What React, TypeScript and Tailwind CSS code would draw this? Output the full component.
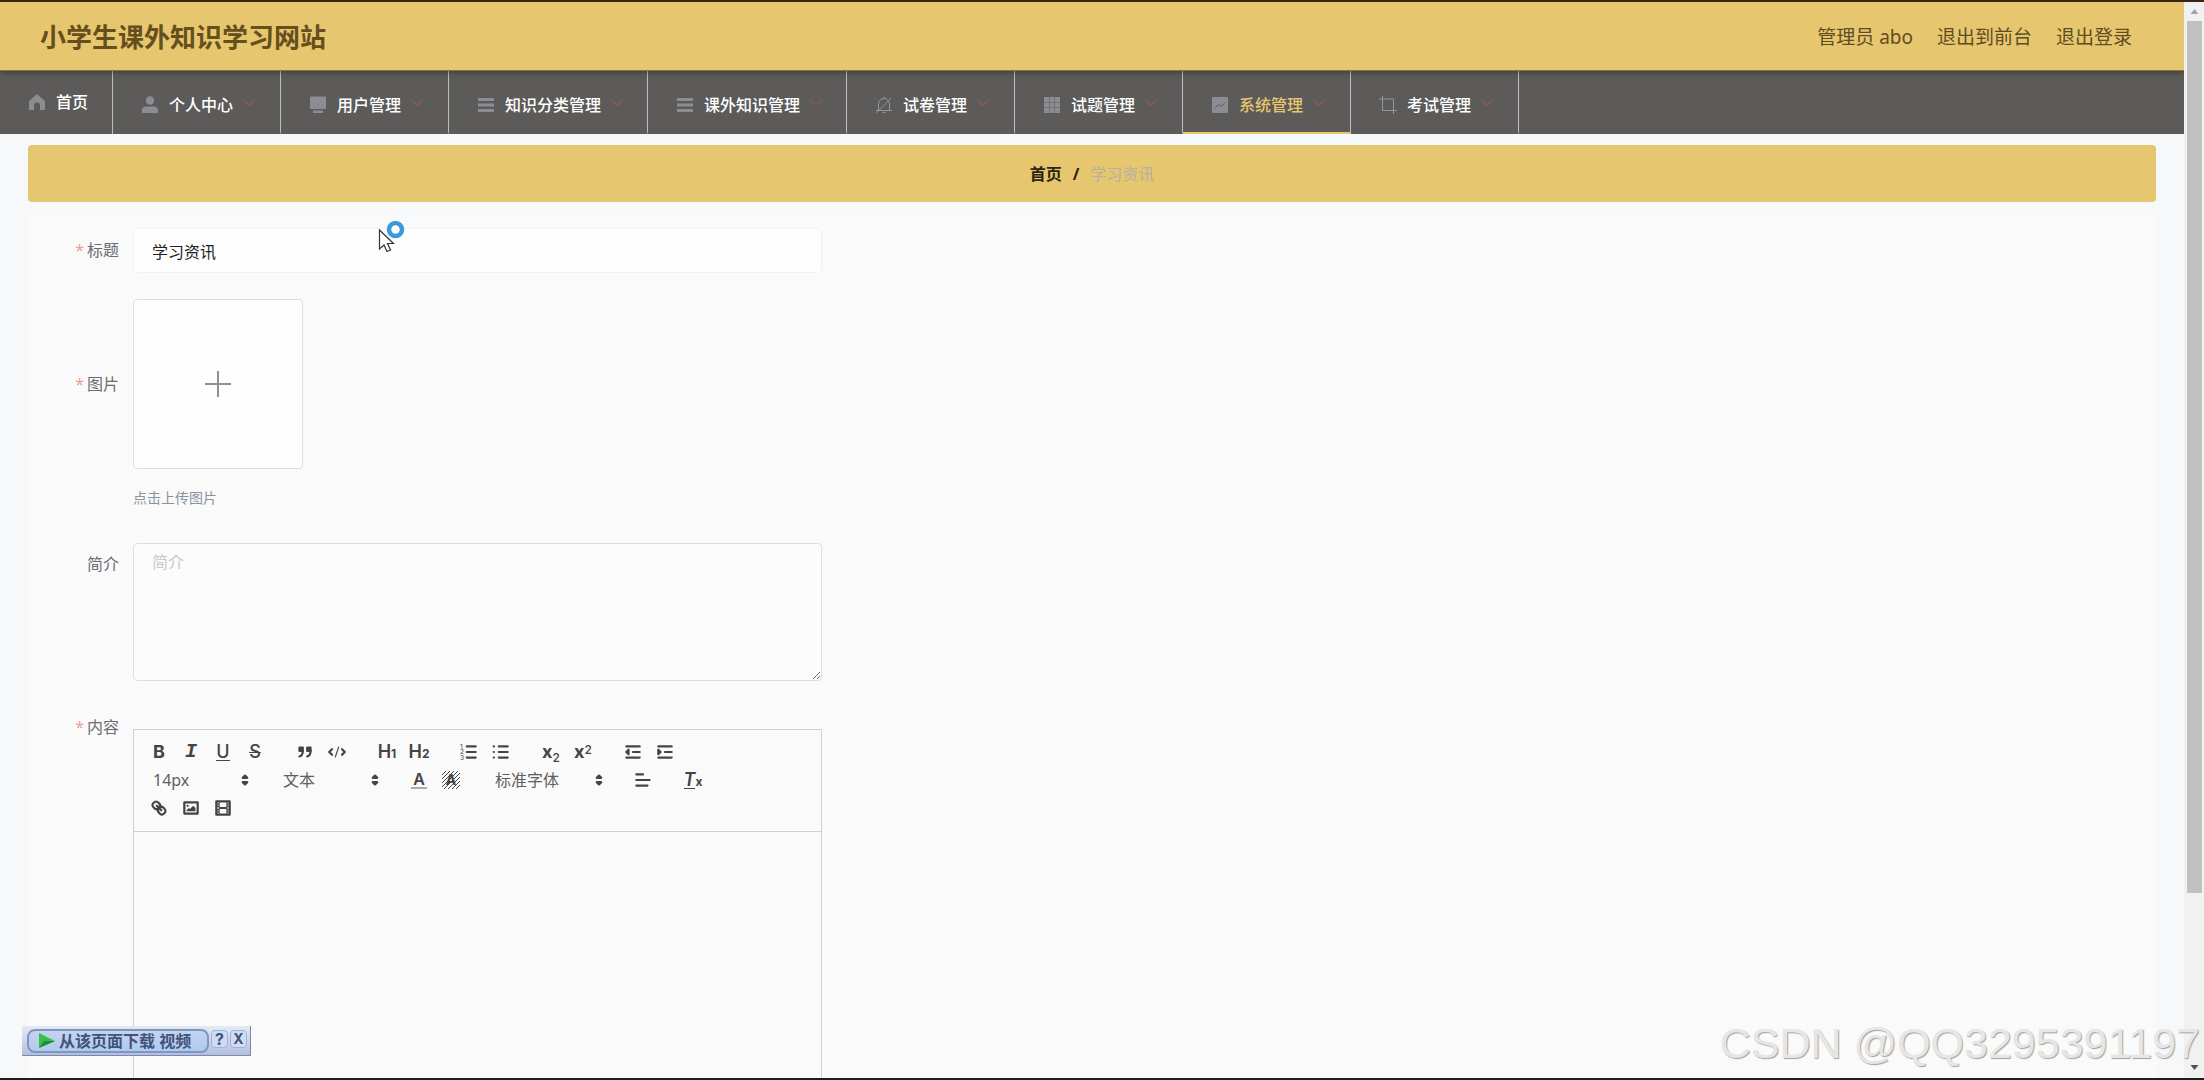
import React, { useState } from "react";

interface MenuItem {
  label: string;
  icon: React.ReactNode;
  wide?: boolean;
  active?: boolean;
}

interface FormRowProps {
  label: string;
  htmlFor: string;
  required?: boolean;
  labelClass: string;
  children: React.ReactNode;
}

const MenuIcon: React.FC<{ children: React.ReactNode }> = ({ children }) => (
  <svg viewBox="0 0 18 18" className="h-[18px] w-[18px] shrink-0 fill-[#8b8d93] stroke-none">
    {children}
  </svg>
);

const homeIcon = (
  <MenuIcon>
    <path d="M9 1 1 8.200V17h5v-4.500a3 3 0 0 1 6 0V17h5V8.200z" />
  </MenuIcon>
);

const lineIcon = (
  <MenuIcon>
    <path d="M1 2h16v3H1zM1 7.500h16v3H1zM1 13h16v3H1z" />
  </MenuIcon>
);

const menus: MenuItem[] = [
  {
    label: "个人中心",
    icon: (
      <MenuIcon>
        <circle cx="9" cy="4.500" r="4.200" />
        <path d="M1 17v-2.500a4 4 0 0 1 4-4h8a4 4 0 0 1 4 4V17z" />
      </MenuIcon>
    ),
  },
  {
    label: "用户管理",
    icon: (
      <MenuIcon>
        <path d="M2 .500h14a1 1 0 0 1 1 1V12a1 1 0 0 1-1 1H2a1 1 0 0 1-1-1V1.500a1 1 0 0 1 1-1zM4 14.500h10V17H4z" />
      </MenuIcon>
    ),
  },
  { label: "知识分类管理", icon: lineIcon, wide: true },
  { label: "课外知识管理", icon: lineIcon, wide: true },
  {
    label: "试卷管理",
    icon: (
      <svg viewBox="0 0 18 18" className="h-[18px] w-[18px] shrink-0 fill-none stroke-[#94969c]">
        <path d="M3.500 14V8a5.500 5.500 0 0 1 11 0v6M1 14.500h16M9 .500V3M7.500 16.500h3M1.500 17 16 2" />
      </svg>
    ),
  },
  {
    label: "试题管理",
    icon: (
      <MenuIcon>
        <path d="M1 1h5v5H1zM6.500 1h5v5h-5zM12 1h5v5h-5zM1 6.500h5v5H1zM6.500 6.500h5v5h-5zM12 6.500h5v5h-5zM1 12h5v5H1zM6.500 12h5v5h-5zM12 12h5v5h-5z" />
      </MenuIcon>
    ),
  },
  {
    label: "系统管理",
    active: true,
    icon: (
      <MenuIcon>
        <rect x="1" y="1" width="16" height="16" rx="1" />
        <path d="m4 12 3.500-3.500 2.500 2L14 6.500" className="fill-none stroke-[#5d5b59]" />
      </MenuIcon>
    ),
  },
  {
    label: "考试管理",
    icon: (
      <svg viewBox="0 0 18 18" className="h-[18px] w-[18px] shrink-0 fill-none stroke-[#94969c]">
        <path d="M0 3h14.500v15M3.500 0v14.500H18" />
      </svg>
    ),
  },
];

// 编辑器工具栏图标
const ToolIcon: React.FC<{ children: React.ReactNode }> = ({ children }) => (
  <svg
    viewBox="0 0 18 18"
    className="h-5 w-5 fill-none stroke-[#444] stroke-2"
    strokeLinecap="round"
    strokeLinejoin="round"
  >
    {children}
  </svg>
);

const ToolButton: React.FC<{ title: string; children: React.ReactNode }> = ({ title, children }) => (
  <button
    type="button"
    aria-label={title}
    className="flex h-7 w-8 items-center justify-center font-[Inter,sans-serif] text-lg leading-none font-semibold text-[#444]"
  >
    {children}
  </button>
);

const ToolSelect: React.FC<{ title: string; value: string; className: string }> = ({
  title,
  value,
  className,
}) => (
  <div className={`relative h-7 ${className}`}>
    <select
      aria-label={title}
      className="h-7 w-full appearance-none bg-transparent pl-[10px] text-base leading-7 text-[#606060] outline-none"
    >
      <option>{value}</option>
    </select>
    <svg
      viewBox="0 0 18 18"
      className="pointer-events-none absolute top-1 right-0 h-5 w-5 fill-[#444] stroke-[#444] stroke-2"
      strokeLinejoin="round"
    >
      <path d="M7 11 9 13l2-2zM7 7l2-2 2 2z" />
    </svg>
  </div>
);

const Toolbar: React.FC = () => (
  <div className="border border-[#d0d0d0] px-[9px] pt-2 pb-[9px]">
    <div className="flex gap-[18px]">
      <div className="flex">
        <ToolButton title="加粗">
          <span className="font-bold">B</span>
        </ToolButton>
        <ToolButton title="斜体">
          <span className="font-['Liberation_Mono',monospace] text-xl leading-5 font-bold italic">I</span>
        </ToolButton>
        <ToolButton title="下划线">
          <span className="border-b border-[#444] text-lg leading-4 font-medium">U</span>
        </ToolButton>
        <ToolButton title="删除线">
          <span className="font-medium line-through decoration-1">S</span>
        </ToolButton>
      </div>
      <div className="flex">
        <ToolButton title="引用">
          <ToolIcon>
            <rect className="fill-[#444]" x="4" y="5" width="3" height="3" />
            <rect className="fill-[#444]" x="11" y="5" width="3" height="3" />
            <path d="M7 8c0 4.031-3 5-3 5M14 8c0 4.031-3 5-3 5" />
          </ToolIcon>
        </ToolButton>
        <ToolButton title="代码">
          <ToolIcon>
            <path d="M4.500 6.500 2 9l2.500 2.500M13.500 6.500 16 9l-2.500 2.500" />
            <path d="M10.500 4.500 7.500 13.500" className="stroke-1" />
          </ToolIcon>
        </ToolButton>
      </div>
      <div className="flex">
        <ToolButton title="标题1">
          H<span className="self-end pb-1 text-xs font-bold">1</span>
        </ToolButton>
        <ToolButton title="标题2">
          H<span className="self-end pb-1 text-xs font-bold">2</span>
        </ToolButton>
      </div>
      <div className="flex">
        <ToolButton title="有序列表">
          <ToolIcon>
            <path d="M7 4h8M7 9h8M7 14h8" />
            <g className="fill-[#444] stroke-none text-[6px] font-normal">
              <text x="1" y="6">1</text>
              <text x="1" y="11">2</text>
              <text x="1" y="16">3</text>
            </g>
          </ToolIcon>
        </ToolButton>
        <ToolButton title="无序列表">
          <ToolIcon>
            <path d="M7 4h8M7 9h8M7 14h8" />
            <path d="M2.500 4h.1M2.500 9h.1M2.500 14h.1" />
          </ToolIcon>
        </ToolButton>
      </div>
      <div className="flex">
        <ToolButton title="下标">
          <span className="font-bold">x</span>
          <span className="self-end text-xs font-medium">2</span>
        </ToolButton>
        <ToolButton title="上标">
          <span className="font-bold">x</span>
          <span className="self-start pt-1 text-xs font-medium">2</span>
        </ToolButton>
      </div>
      <div className="flex">
        <ToolButton title="减少缩进">
          <ToolIcon>
            <path d="M3 14h12M3 4h12M9 9h6" />
            <path className="fill-[#444]" d="M5 7v4L3 9z" />
          </ToolIcon>
        </ToolButton>
        <ToolButton title="增加缩进">
          <ToolIcon>
            <path d="M3 14h12M3 4h12M9 9h6" />
            <path className="fill-[#444]" d="M3 7v4l2-2z" />
          </ToolIcon>
        </ToolButton>
      </div>
    </div>

    <div className="flex gap-[18px]">
      <ToolSelect title="字号" value="14px" className="w-[112px]" />
      <ToolSelect title="标题" value="文本" className="w-[112px]" />
      <div className="flex">
        <ToolButton title="字体颜色">
          <span className="border-b-2 border-[#aaa] px-[2px] text-base leading-4">A</span>
        </ToolButton>
        <ToolButton title="背景颜色">
          <svg viewBox="0 0 18 18" className="h-[18px] w-[18px]">
            <path
              d="M0 4 4 0M0 8 8 0M0 12 12 0M0 16 16 0M2 18 18 2M6 18 18 6M10 18 18 10M14 18l4-4"
              className="stroke-[#444] stroke-1"
            />
            <text x="9" y="14" textAnchor="middle" className="fill-[#444] text-sm font-bold">
              A
            </text>
          </svg>
        </ToolButton>
      </div>
      <ToolSelect title="字体" value="标准字体" className="w-[124px]" />
      <ToolButton title="对齐">
        <ToolIcon>
          <path d="M3 9h12M3 14h10M3 4h6" />
        </ToolIcon>
      </ToolButton>
      <ToolButton title="清除格式">
        <span className="border-b border-[#444] text-lg leading-4 italic">T</span>
        <span className="self-end pb-1 text-xs font-bold">x</span>
      </ToolButton>
    </div>

    <div className="flex">
      <ToolButton title="链接">
        <ToolIcon>
          <path d="m7 7 4 4" />
          <path d="M8.900 4.577a3.476 3.476 0 0 1 .36 4.679A3.476 3.476 0 0 1 4.577 8.900C3.185 7.500 2.035 6.400 4.217 4.217S7.500 3.185 8.900 4.577Z" />
          <path d="M13.423 9.100a3.476 3.476 0 0 0-4.679-.36 3.476 3.476 0 0 0 .36 4.679c1.392 1.392 2.500 2.542 4.679.36S14.815 10.500 13.423 9.100Z" />
        </ToolIcon>
      </ToolButton>
      <ToolButton title="图片">
        <ToolIcon>
          <rect x="3" y="4" width="12" height="10" />
          <g className="fill-[#444] stroke-none">
            <circle cx="6" cy="7" r="1" />
            <path d="M5 12v-1l2-2 1 1 3-3 2 2v3z" />
          </g>
        </ToolIcon>
      </ToolButton>
      <ToolButton title="视频">
        <ToolIcon>
          <rect x="3" y="3" width="12" height="12" />
          <path
            className="fill-[#444] stroke-none"
            d="M5 3h1v12H5zM12 3h1v12h-1zM5 8h8v2H5zM3 5h3v1H3zM3 7h3v1H3zM3 10h3v1H3zM3 12h3v1H3zM12 5h3v1h-3zM12 7h3v1h-3zM12 10h3v1h-3zM12 12h3v1h-3z"
          />
        </ToolIcon>
      </ToolButton>
    </div>
  </div>
);

const FormRow: React.FC<FormRowProps> = ({ label, htmlFor, required, labelClass, children }) => (
  <div className="flex">
    <label
      htmlFor={htmlFor}
      className={`w-[105px] shrink-0 pr-[14px] text-right text-base text-[#6a6c70] ${labelClass}`}
    >
      {required && <span className="mr-[3px] text-[#f09a9a]">*</span>}
      {label}
    </label>
    <div className="w-[689px]">{children}</div>
  </div>
);

const App: React.FC = () => {
  const [title, setTitle] = useState<string>("学习资讯");
  const [intro, setIntro] = useState<string>("");

  return (
    <div className="relative flex h-screen overflow-hidden border-t-2 border-b-2 border-t-[#3d2313] border-b-[#1d1e22] bg-[#f6f8fa] font-['Noto_Sans','Noto_Sans_CJK_SC',sans-serif]">
      <div className="min-w-0 flex-1 overflow-hidden">
        {/* 顶部 */}
        <header className="relative flex h-[69px] items-center justify-between border-b border-[#8a7540] bg-[#e6c66e] pt-[2px] pr-[52px] pl-10 shadow-[0_1px_6px_rgba(0,0,0,0.4)]">
          <h1 className="text-[26px] leading-9 font-bold text-[#664f1c]">小学生课外知识学习网站</h1>
          <div className="flex gap-6 text-[19px] leading-7 text-[#5f4d22]">
            <span>管理员 abo</span>
            <a href="#front">退出到前台</a>
            <a href="#logout">退出登录</a>
          </div>
        </header>

        {/* 导航菜单 */}
        <nav className="flex h-[63px] bg-[#5d5b59] text-base font-medium text-white">
          <a
            href="#home"
            className="flex w-[113px] items-center gap-[10px] border-r border-[#bdbdbd] pb-[2px] pl-7"
          >
            {homeIcon}
            首页
          </a>
          {menus.map((menu) => (
            <button
              key={menu.label}
              type="button"
              className={`flex items-center gap-[10px] border-r border-b-2 border-r-[#bdbdbd] pt-2 pb-[2px] pl-7 ${
                menu.wide ? "w-[199px]" : "w-[168px]"
              } ${menu.active ? "border-b-[#e6c66e] text-[#e6c66e]" : "border-b-[#5d5b59]"}`}
            >
              {menu.icon}
              <span className="whitespace-nowrap">{menu.label}</span>
              <svg viewBox="0 0 12 12" className="h-3 w-3 shrink-0 fill-none stroke-[#b04f62]">
                <path d="m0 1 6 5 6-5" />
              </svg>
            </button>
          ))}
        </nav>

        <main className="px-7 pt-[11px]">
          {/* 面包屑 */}
          <div className="flex h-[57px] items-center justify-center gap-[11px] rounded bg-[#e6c66e] text-base">
            <a href="#home" className="font-bold text-[#2b2414]">
              首页
            </a>
            <span className="font-bold text-[#2b2414]">/</span>
            <span className="text-[#b5b0a2]">学习资讯</span>
          </div>

          {/* 表单 */}
          <form className="mt-[14px] flex flex-col gap-[26px] bg-[#fafafa] pt-3">
            <FormRow label="标题" htmlFor="title" required labelClass="leading-[45px]">
              <input
                id="title"
                type="text"
                className="block h-[45px] w-full rounded border border-[#f2f2f2] bg-[#fdfdfd] px-[18px] text-base text-[#222] outline-none"
                value={title}
                onChange={(e) => setTitle(e.target.value)}
              />
            </FormRow>

            <FormRow label="图片" htmlFor="upload" required labelClass="leading-[170px]">
              <button
                id="upload"
                type="button"
                aria-label="上传图片"
                className="flex h-[170px] w-[170px] items-center justify-center rounded border border-[#e0e0e0] bg-[#fdfdfd]"
              >
                <svg viewBox="0 0 26 26" className="h-[26px] w-[26px] stroke-[#8c8f96] stroke-2">
                  <path d="M13 0v26M0 13h26" />
                </svg>
              </button>
              <p className="mt-[18px] mb-2 text-sm leading-[22px] text-[#8a929e]">点击上传图片</p>
            </FormRow>

            <FormRow label="简介" htmlFor="intro" labelClass="leading-[42px]">
              <textarea
                id="intro"
                placeholder="简介"
                className="block h-[138px] w-full rounded border border-[#dedede] bg-[#fcfcfc] px-[18px] py-[6px] text-base leading-6 text-[#606266] outline-none placeholder:text-[#c5c8ce]"
                value={intro}
                onChange={(e) => setIntro(e.target.value)}
              />
            </FormRow>

            <FormRow label="内容" htmlFor="content" required labelClass="leading-10">
              <div className="pt-[22px]">
                <Toolbar />
                <textarea
                  id="content"
                  className="block h-[460px] w-full resize-none border border-t-0 border-[#d0d0d0] px-4 py-3 text-base outline-none"
                />
              </div>
            </FormRow>
          </form>
        </main>
      </div>

      {/* 滚动条 */}
      <div className="flex w-5 shrink-0 flex-col items-center justify-between bg-[#f1f1f1]">
        <div className="flex h-full w-[15px] flex-col items-center">
          <svg viewBox="0 0 15 19" className="h-[19px] w-[15px] shrink-0 fill-[#a3a3a3]">
            <path d="m3.500 12 4-5 4 5z" />
          </svg>
          <div className="h-33/40 w-full bg-[#c1c1c1]" />
        </div>
        <svg viewBox="0 0 15 19" className="h-[19px] w-[15px] shrink-0 fill-[#505050]">
          <path d="m3.500 6 4 5 4-5z" />
        </svg>
      </div>

      {/* 鼠标指针 */}
      <svg viewBox="0 0 30 34" className="pointer-events-none absolute top-[217px] left-[377px] h-[34px] w-[30px]">
        <path
          d="M2.500 11v19l4.500-4 3 6.500 3.500-1.500-3-6.500h6z"
          className="fill-white stroke-[#333]"
          strokeWidth="1.2"
        />
        <circle cx="18.500" cy="10.500" r="6.500" className="fill-white stroke-[#3a9bdc]" strokeWidth="4.500" />
      </svg>

      {/* 下载浮条 */}
      <div className="absolute bottom-[22px] left-[22px] flex h-[30px] items-center gap-[2px] border-r border-b border-[#7d88a8] bg-linear-to-b from-[#e4eaf5] to-[#b3bfdf] pr-[3px] pl-[5px]">
        <button
          type="button"
          className="flex h-6 w-[182px] items-center gap-1 rounded-lg border-2 border-[#8295c0] bg-linear-to-b from-[#c3d3ee] to-[#b0cbf0] pl-[10px] text-base leading-5 font-bold whitespace-nowrap text-[#42527a]"
        >
          <svg viewBox="0 0 16 16" className="h-4 w-4 shrink-0">
            <path d="M0 0v15l16-7z" className="fill-[#35c04a]" />
            <path d="M0 15 16 8H5z" className="fill-[#218b3c]" />
          </svg>
          从该页面下载 视频
        </button>
        <button
          type="button"
          className="mb-1 flex h-[18px] w-[17px] items-center justify-center rounded border border-[#9fb2d8] bg-[#cfdcf2] font-[Inter,sans-serif] text-base leading-4 font-bold text-[#43557f]"
        >
          ?
        </button>
        <button
          type="button"
          className="mb-1 flex h-[18px] w-[17px] items-center justify-center rounded border border-[#9fb2d8] bg-[#cfdcf2] font-[Inter,sans-serif] text-sm leading-4 font-bold text-[#43557f]"
        >
          X
        </button>
      </div>

      {/* 水印 */}
      <p className="pointer-events-none absolute right-1 bottom-[10px] font-['Liberation_Sans',sans-serif] text-[43px] leading-[50px] whitespace-nowrap text-[#e6e6e6] [text-shadow:1px_1px_1px_#a0a0a0]">
        CSDN @QQ3295391197
      </p>
    </div>
  );
};

export default App;
